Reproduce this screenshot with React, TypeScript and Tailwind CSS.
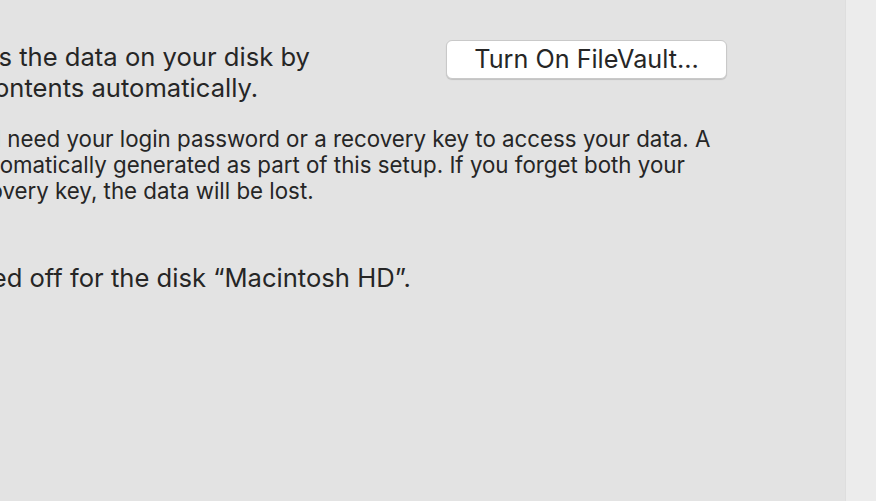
export default function App() {
  return (
    <div className="w-[876px] h-[501px] flex bg-[#e3e3e3] text-[#262626] font-['Inter',sans-serif] overflow-hidden">
      <div className="w-[845px] h-full overflow-hidden">
        <div className="ml-[-193px] pt-[41px] w-[1000px]">
          <div className="flex items-start">
            <p className="w-[639px] text-[25.6px] leading-[31px] whitespace-nowrap">
              FileVault secures the data on your disk by
              <br />
              encrypting its contents automatically.
            </p>
            <button className="mt-[-1px] w-[281px] h-[39px] rounded-[6px] bg-white border border-[#c9c9c9] shadow-[0_1px_1px_rgba(0,0,0,0.15)] text-[25.2px] leading-none text-[#262626]">
              Turn On FileVault…
            </button>
          </div>
          <p className="ml-[-6px] mt-[23px] text-[22.3px] leading-[26px] whitespace-nowrap">
            WARNING: You will need your login password or a recovery key to access your data. A
            <br />
            recovery key is automatically generated as part of this setup. If you forget both your
            <br />
            password and recovery key, the data will be lost.
          </p>
          <p className="mt-[58px] text-[25.6px] leading-[31px] whitespace-nowrap">
            FileVault is turned off for the disk “Macintosh HD”.
          </p>
        </div>
      </div>
      <div className="flex-1 h-full bg-[#ececec] border-l border-[#dedede]" />
    </div>
  );
}
